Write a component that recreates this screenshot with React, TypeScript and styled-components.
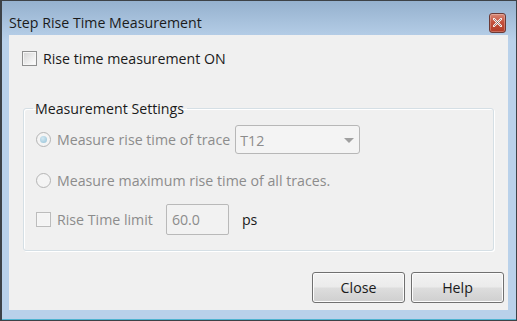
import styled, { createGlobalStyle } from 'styled-components';

const GlobalStyle = createGlobalStyle`
    html, body {
        margin: 0;
        padding: 0;
        background: #ffffff;
    }
    body {
        font-family: "Open Sans", "Liberation Sans", sans-serif;
        font-size: 14.2px;
    }
`;

const Window = styled.div`
    width: 517px;
    height: 321px;
    box-sizing: border-box;
    border: 1px solid #3d4247;
    border-left-width: 2px;
    background: linear-gradient(to bottom, #95b1ce 0px, #b0c9e3 30px, #b9d1ea 40px, #b9d1ea 100%);
    display: flex;
    flex-direction: column;
    overflow: hidden;
`;

const TitleBar = styled.div`
    height: 34px;
    display: flex;
    align-items: center;
    justify-content: space-between;
    padding: 0 10px 0 7px;
`;

const Title = styled.span`
    color: #1b1b1b;
    margin-top: 8px;
`;

const CloseBox = styled.div`
    width: 15px;
    height: 18px;
    border: 1px solid #6b3a36;
    border-radius: 3px;
    background: linear-gradient(to bottom, #d98a78 0%, #c4503c 45%, #b23a26 100%);
    display: flex;
    align-items: center;
    justify-content: center;
    margin-top: 9px;
    box-shadow: inset 0 0 0 1px rgba(255, 255, 255, 0.25);
`;

const Body = styled.div`
    margin: 0 8px 0 7px;
    height: 275px;
    background: #f0f0f0;
    box-sizing: border-box;
    padding: 14px 4px 7px 13px;
    display: flex;
    flex-direction: column;
`;

const BottomEdge = styled.div`
    flex: 1;
    border-bottom: 1px solid #4fb3d0;
`;

const Row = styled.label<{ $disabled?: boolean }>`
    display: flex;
    align-items: center;
    gap: 6px;
    color: ${p => (p.$disabled ? '#8c8c8c' : '#1a1a1a')};
    height: 18px;
    white-space: nowrap;
`;

const Check = styled.span<{ $disabled?: boolean }>`
    width: 13px;
    height: 13px;
    border: 1px solid ${p => (p.$disabled ? '#bcbcbc' : '#8e8f8f')};
    background: ${p => (p.$disabled
        ? '#f4f4f4'
        : 'linear-gradient(135deg, #d4d4d4 0%, #f3f3f3 70%, #ffffff 100%)')};
    box-shadow: inset 0 0 0 1px #f6f6f6;
    flex-shrink: 0;
`;

const Radio = styled.span<{ $checked?: boolean }>`
    width: 13px;
    height: 13px;
    border: 1px solid #b4b4b4;
    border-radius: 50%;
    background: #f4f4f4;
    display: flex;
    align-items: center;
    justify-content: center;
    flex-shrink: 0;

    &::after {
        content: '';
        display: ${p => (p.$checked ? 'block' : 'none')};
        width: 7px;
        height: 7px;
        border-radius: 50%;
        background: radial-gradient(circle at 40% 35%, #d4e8f2 0%, #a6cddf 70%, #8fbcd3 100%);
    }
`;

const Group = styled.fieldset`
    margin: 32px 10px 0 1px;
    padding: 0 0 0 12px;
    height: 152px;
    box-sizing: border-box;
    border: 1px solid #d5dfe5;
    border-radius: 3px;
    box-shadow: inset 1px 1px 0 #ffffff, 1px 1px 0 #ffffff;
    display: flex;
    flex-direction: column;
`;

const Legend = styled.legend`
    color: #1a1a1a;
    padding: 0 3px 0 2px;
    margin-left: -3px;
`;

const OptionRow = styled.div<{ $top: number }>`
    display: flex;
    align-items: center;
    gap: 6px;
    margin-top: ${p => p.$top}px;
`;

const Combo = styled.div`
    width: 125px;
    height: 29px;
    box-sizing: border-box;
    border: 1px solid #b7b7b7;
    border-radius: 3px;
    background: #f4f4f4;
    display: flex;
    align-items: center;
    justify-content: space-between;
    padding: 2px 5px 0 4px;
    margin-left: -1px;
    color: #8c8c8c;
`;

const Arrow = styled.span`
    width: 0;
    height: 0;
    border-left: 5px solid transparent;
    border-right: 5px solid transparent;
    border-top: 5px solid #a0a0a0;
`;

const Field = styled.div`
    width: 63px;
    height: 31px;
    box-sizing: border-box;
    border: 1px solid #b9b9b9;
    border-radius: 2px;
    background: #f2f2f2;
    display: flex;
    align-items: center;
    padding-left: 5px;
    color: #8c8c8c;
    margin-left: 7px;
`;

const Unit = styled.span`
    color: #1a1a1a;
    margin-left: 7px;
`;

const ButtonBar = styled.div`
    margin-top: auto;
    display: flex;
    justify-content: flex-end;
    gap: 6px;
`;

const Button = styled.button`
    width: 93px;
    height: 31px;
    border: 1px solid #707070;
    border-radius: 3px;
    background: linear-gradient(to bottom, #f2f2f2 0%, #ebebeb 48%, #dddddd 52%, #cfcfcf 100%);
    box-shadow: inset 0 0 0 1px #fcfcfc;
    font-family: inherit;
    font-size: inherit;
    color: #1a1a1a;
    padding: 0;
`;

const App = () => (
    <>
        <GlobalStyle />
        <Window>
            <TitleBar>
                <Title>Step Rise Time Measurement</Title>
                <CloseBox>
                    <svg width="9" height="9" viewBox="0 0 9 9">
                        <path d="M1 1 L8 8 M8 1 L1 8" stroke="#ffffff" strokeWidth="2" strokeLinecap="square" />
                        <path d="M1 1 L8 8 M8 1 L1 8" stroke="#5a2a24" strokeWidth="0.6" />
                    </svg>
                </CloseBox>
            </TitleBar>
            <Body>
                <Row>
                    <Check />
                    Rise time measurement ON
                </Row>
                <Group>
                    <Legend>Measurement Settings</Legend>
                    <OptionRow $top={7}>
                        <Row $disabled>
                            <Radio $checked />
                            Measure rise time of trace
                        </Row>
                        <Combo>
                            T12
                            <Arrow />
                        </Combo>
                    </OptionRow>
                    <OptionRow $top={17}>
                        <Row $disabled>
                            <Radio />
                            Measure maximum rise time of all traces.
                        </Row>
                    </OptionRow>
                    <OptionRow $top={15}>
                        <Row $disabled>
                            <Check $disabled />
                            Rise Time limit
                        </Row>
                        <Field>60.0</Field>
                        <Unit>ps</Unit>
                    </OptionRow>
                </Group>
                <ButtonBar>
                    <Button>Close</Button>
                    <Button>Help</Button>
                </ButtonBar>
            </Body>
            <BottomEdge />
        </Window>
    </>
);

export default App;
